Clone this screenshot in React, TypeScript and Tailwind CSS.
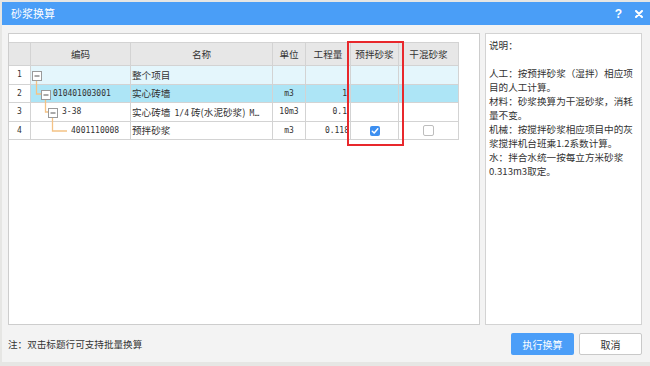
import React from "react";

const line = "border-[#d3d3d3]";

function CheckedBox() {
  return (
    <span className="w-[10px] h-[10px] rounded-[2px] bg-[#3d8ff0] flex items-center justify-center">
      <svg width="8" height="8" viewBox="0 0 8 8">
        <path d="M1.3 4.2 L3.2 6 L6.8 1.8" fill="none" stroke="#fff" strokeWidth="1.5" strokeLinecap="round" strokeLinejoin="round" />
      </svg>
    </span>
  );
}

function EmptyBox() {
  return <span className="w-[11px] h-[11px] rounded-[2px] bg-white border border-[#bdbdbd]" />;
}

export default function App() {
  const mono = "font-['DejaVu_Sans_Mono',monospace] text-[8px]";
  return (
    <div className="w-[650px] h-[366px] bg-[#e6e6e4] pl-[2px] pt-[2px] overflow-hidden font-['Noto_Sans_CJK_SC','Noto_Sans',sans-serif] text-[#333]">
      <div className="w-[648px] h-[360px] bg-[#f3f3f3] flex flex-col">
        {/* Title bar */}
        <div className="h-[23px] shrink-0 bg-[#4a9ef7] flex items-center pl-[9px] pr-[7px]">
          <span className="text-white text-[11px] leading-none">砂浆换算</span>
          <div className="ml-auto flex items-center gap-[13px]">
            <span className="text-white text-[12px] font-bold leading-none font-['Liberation_Sans',sans-serif]">?</span>
            <svg width="8" height="8" viewBox="0 0 8 8">
              <path d="M1 1 L7 7 M7 1 L1 7" stroke="#fff" strokeWidth="2" strokeLinecap="round" />
            </svg>
          </div>
        </div>

        {/* Body */}
        <div className="flex gap-[5px] pt-[8px] pl-[6px] pr-[8px]">
          {/* Left panel */}
          <div className="relative w-[472px] h-[292px] bg-white border border-[#cdcdcd] pt-[8px]">
            <div className={`w-[450px] border-t ${line} text-[9.6px]`}>
              {/* Header */}
              <div className={`flex h-[23px] bg-[#e7e7e7] border-b ${line}`}>
                <div className={`w-[22px] border-r ${line}`} />
                <div className={`w-[100px] border-r ${line} flex items-center justify-center`}>编码</div>
                <div className={`w-[142px] border-r ${line} flex items-center justify-center`}>名称</div>
                <div className={`w-[33px] border-r ${line} flex items-center justify-center`}>单位</div>
                <div className={`w-[45px] border-r ${line} flex items-center justify-center`}>工程量</div>
                <div className={`w-[48px] border-r ${line} flex items-center justify-center`}>预拌砂浆</div>
                <div className={`w-[60px] border-r ${line} flex items-center justify-center`}>干混砂浆</div>
              </div>
              {/* Row 1 */}
              <div className={`flex h-[19px] border-b ${line}`}>
                <div className={`w-[22px] border-r ${line} flex items-center justify-center ${mono}`}>1</div>
                <div className={`w-[100px] border-r ${line} bg-[#e4f6fc]`} />
                <div className={`w-[142px] border-r ${line} bg-[#e4f6fc] flex items-center pl-[1px]`}>整个项目</div>
                <div className={`w-[33px] border-r ${line} bg-[#e4f6fc]`} />
                <div className={`w-[45px] border-r ${line} bg-[#e4f6fc]`} />
                <div className={`w-[48px] border-r ${line} bg-[#e4f6fc]`} />
                <div className={`w-[60px] border-r ${line} bg-[#e4f6fc]`} />
              </div>
              {/* Row 2 */}
              <div className={`flex h-[18px] border-b ${line}`}>
                <div className={`w-[22px] border-r ${line} flex items-center justify-center ${mono}`}>2</div>
                <div className={`w-[100px] border-r ${line} bg-[#ade5f6] flex items-center pl-[22px] ${mono}`}>010401003001</div>
                <div className={`w-[142px] border-r ${line} bg-[#ade5f6] flex items-center pl-[1px]`}>实心砖墙</div>
                <div className={`w-[33px] border-r ${line} bg-[#ade5f6] flex items-center justify-center ${mono}`}>m3</div>
                <div className={`w-[45px] border-r ${line} bg-[#ade5f6] flex items-center justify-end pr-[3px] ${mono}`}>1</div>
                <div className={`w-[48px] border-r ${line} bg-[#ade5f6]`} />
                <div className={`w-[60px] border-r ${line} bg-[#ade5f6]`} />
              </div>
              {/* Row 3 */}
              <div className={`flex h-[19px] border-b ${line}`}>
                <div className={`w-[22px] border-r ${line} flex items-center justify-center ${mono}`}>3</div>
                <div className={`w-[100px] border-r ${line} flex items-center pl-[31px] ${mono}`}>3-38</div>
                <div className={`w-[142px] border-r ${line} flex items-center pl-[1px] overflow-hidden`}>
                  <span className="whitespace-nowrap">
                    实心砖墙 <span className={`${mono} mx-[2px]`}>1/4</span>砖(水泥砂浆) <span className={`${mono} ml-[2px]`}>M…</span>
                  </span>
                </div>
                <div className={`w-[33px] border-r ${line} flex items-center justify-center ${mono}`}>10m3</div>
                <div className={`w-[45px] border-r ${line} flex items-center justify-end pr-[3px] ${mono}`}>0.1</div>
                <div className={`w-[48px] border-r ${line}`} />
                <div className={`w-[60px] border-r ${line}`} />
              </div>
              {/* Row 4 */}
              <div className={`flex h-[18px] border-b ${line}`}>
                <div className={`w-[22px] border-r ${line} flex items-center justify-center ${mono}`}>4</div>
                <div className={`w-[100px] border-r ${line} flex items-center pl-[40px] ${mono}`}>4001110008</div>
                <div className={`w-[142px] border-r ${line} flex items-center pl-[1px]`}>预拌砂浆</div>
                <div className={`w-[33px] border-r ${line} flex items-center justify-center ${mono}`}>m3</div>
                <div className={`w-[45px] border-r ${line} flex items-center justify-end pr-[1px] overflow-hidden ${mono}`}>0.118</div>
                <div className={`w-[48px] border-r ${line} flex items-center justify-center`}>
                  <CheckedBox />
                </div>
                <div className={`w-[60px] border-r ${line} flex items-center justify-center`}>
                  <EmptyBox />
                </div>
              </div>
            </div>

            {/* Tree connectors and toggles */}
            <svg className="absolute left-[21px] top-[32px]" width="50" height="74" viewBox="0 0 50 74">
              <g stroke="#f4c285" strokeWidth="1.3" fill="none">
                <path d="M6.5 14 V28 H11" />
                <path d="M15.5 33 V46 H18" />
                <path d="M22.5 51 V65 H37" />
              </g>
              <g fill="#fff" stroke="#9a9a9a" strokeWidth="1">
                <rect x="2.5" y="5.5" width="9" height="9" />
                <rect x="11.5" y="24.5" width="9" height="9" />
                <rect x="18.5" y="42.5" width="9" height="9" />
              </g>
              <g stroke="#555" strokeWidth="1">
                <path d="M4.5 10 H9.5" />
                <path d="M13.5 29 H18.5" />
                <path d="M20.5 47 H25.5" />
              </g>
            </svg>

            {/* Red highlight */}
            <div className="absolute left-[338px] top-[7px] w-[57px] h-[105px] border-2 border-[#e8282c]" />
          </div>

          {/* Right panel */}
          <div className="w-[157px] h-[292px] bg-white border border-[#d3d3d3] pl-[3px] pt-[4px] text-[9.6px] leading-[14px] whitespace-nowrap">
            <div>说明：</div>
            <div>&nbsp;</div>
            <div>人工：按预拌砂浆（湿拌）相应项</div>
            <div>目的人工计算。</div>
            <div>材料：砂浆换算为干混砂浆，消耗</div>
            <div>量不变。</div>
            <div>机械：按搅拌砂浆相应项目中的灰</div>
            <div>浆搅拌机台班乘1.2系数计算。</div>
            <div>水：拌合水统一按每立方米砂浆</div>
            <div>0.313m3取定。</div>
          </div>
        </div>

        {/* Footer */}
        <div className="flex items-center h-[22px] mt-[8px] pl-[6px] pr-[8px] text-[9.6px]">
          <span>注：双击标题行可支持批量换算</span>
          <div className="ml-auto flex gap-[5px]">
            <button className="w-[63px] h-[22px] rounded-[2px] bg-[#4b9ef8] text-white text-[10px]">执行换算</button>
            <button className="w-[63px] h-[22px] rounded-[2px] bg-white border border-[#c9c9c9] text-[#333] text-[10px]">取消</button>
          </div>
        </div>
      </div>
    </div>
  );
}
